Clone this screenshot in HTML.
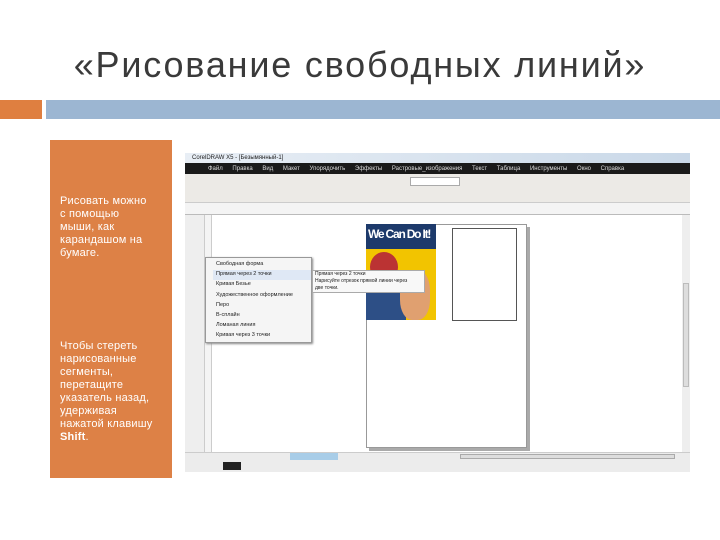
<!DOCTYPE html>
<html><head><meta charset="utf-8"><style>
*{margin:0;padding:0;box-sizing:border-box}
body{width:720px;height:540px;background:#fff;position:relative;overflow:hidden;font-family:"Liberation Sans",sans-serif}
.a{position:absolute}
.t{font-size:8px;color:#222;white-space:nowrap;line-height:10px}
.o{color:#fff;font-size:11px;line-height:13px;white-space:nowrap;letter-spacing:0.2px}
</style></head><body>
<div class="a" style="left:0;top:44px;width:720px;text-align:center;font-size:36px;color:#3a3a3a;letter-spacing:1.8px">«Рисование свободных линий»</div>
<div class="a" style="left:0;top:100px;width:42px;height:19px;background:#df7f40"></div>
<div class="a" style="left:46px;top:100px;width:674px;height:19px;background:#9cb6d2"></div>
<div class="a" style="left:50px;top:140px;width:122px;height:338px;background:#dd8146"></div>
<div class="a o" style="left:60px;top:195px">Рисовать можно<br>с помощью<br>мыши, как<br>карандашом на<br>бумаге.</div>
<div class="a o" style="left:60px;top:340px">Чтобы стереть<br>нарисованные<br>сегменты,<br>перетащите<br>указатель назад,<br>удерживая<br>нажатой клавишу<br><b>Shift</b>.</div>

<div class="a" style="left:185px;top:153px;width:505px;height:319px;background:#f0f0f0;border:1px solid #ccc"></div>
<div class="a" style="left:185px;top:153px;width:505px;height:10px;background:linear-gradient(90deg,#e8eef5,#c9d8e8)"></div>
<div class="a t" style="left:192px;top:153px;font-size:6px">CorelDRAW X5 - [Безымянный-1]</div>
<div class="a" style="left:185px;top:163px;width:505px;height:11px;background:#1a1a1a"></div>
<div class="a t" style="left:208px;top:164px;font-size:6px;color:#ddd;word-spacing:8px">Файл Правка Вид Макет Упорядочить Эффекты Растровые_изображения Текст Таблица Инструменты Окно Справка</div>
<div class="a" style="left:185px;top:174px;width:505px;height:29px;background:#eceae6;border-bottom:1px solid #ccc"></div>
<div class="a" style="left:410px;top:177px;width:50px;height:9px;background:#fff;border:1px solid #aaa"></div>
<div class="a" style="left:185px;top:203px;width:505px;height:12px;background:#f4f4f4;border-bottom:1px solid #bbb"></div>
<div class="a" style="left:185px;top:215px;width:20px;height:242px;background:#eeeeee;border-right:1px solid #ccc"></div>
<div class="a" style="left:205px;top:215px;width:7px;height:242px;background:#f4f4f4;border-right:1px solid #ccc"></div>
<div class="a" style="left:212px;top:215px;width:470px;height:237px;background:#fff"></div>
<div class="a" style="left:682px;top:215px;width:8px;height:237px;background:#eee"></div>
<div class="a" style="left:683px;top:283px;width:6px;height:104px;background:#ddd;border:1px solid #bbb"></div>
<div class="a" style="left:369px;top:227px;width:161px;height:224px;background:#aaa"></div>
<div class="a" style="left:366px;top:224px;width:161px;height:224px;background:#fff;border:1px solid #999"></div>
<div class="a" style="left:366px;top:224px;width:70px;height:96px;background:#f2c400;overflow:hidden"></div>
<div class="a" style="left:366px;top:224px;width:70px;height:25px;background:#1d3a6b"></div>
<div class="a" style="left:368px;top:227px;font-size:12px;font-weight:bold;color:#fff;letter-spacing:-1.2px">We Can Do It!</div>
<div class="a" style="left:370px;top:252px;width:28px;height:30px;border-radius:50%;background:#b33"></div>
<div class="a" style="left:366px;top:290px;width:40px;height:30px;background:#2d4f86"></div>
<div class="a" style="left:400px;top:270px;width:30px;height:50px;border-radius:40%;background:#e0a070"></div>
<div class="a" style="left:452px;top:228px;width:65px;height:93px;border:1px solid #555;background:#fff"></div>
<div class="a" style="left:205px;top:257px;width:107px;height:86px;background:#f5f5f5;border:1px solid #999;box-shadow:1px 1px 2px #888"></div>
<div class="a" style="left:213px;top:270px;width:98px;height:10px;background:#dfe8f5"></div>
<div class="a t" style="left:216px;top:259px;font-size:5.5px;line-height:10.2px">Свободная форма<br>Прямая через 2 точки<br>Кривая Безье<br>Художественное оформление<br>Перо<br>B-сплайн<br>Ломаная линия<br>Кривая через 3 точки</div>
<div class="a" style="left:312px;top:270px;width:113px;height:23px;background:#f8f8f8;border:1px solid #aaa"></div>
<div class="a t" style="left:315px;top:271px;font-size:5px;line-height:7px">Прямая через 2 точки<br>Нарисуйте отрезок прямой линии через<br>две точки.</div>
<div class="a" style="left:185px;top:452px;width:505px;height:20px;background:#ececec;border-top:1px solid #ccc"></div>
<div class="a" style="left:290px;top:453px;width:48px;height:7px;background:#a8cde8"></div>
<div class="a" style="left:460px;top:454px;width:215px;height:5px;background:#ddd;border:1px solid #aaa"></div>
<div class="a" style="left:223px;top:462px;width:18px;height:8px;background:#222"></div>
</body></html>
